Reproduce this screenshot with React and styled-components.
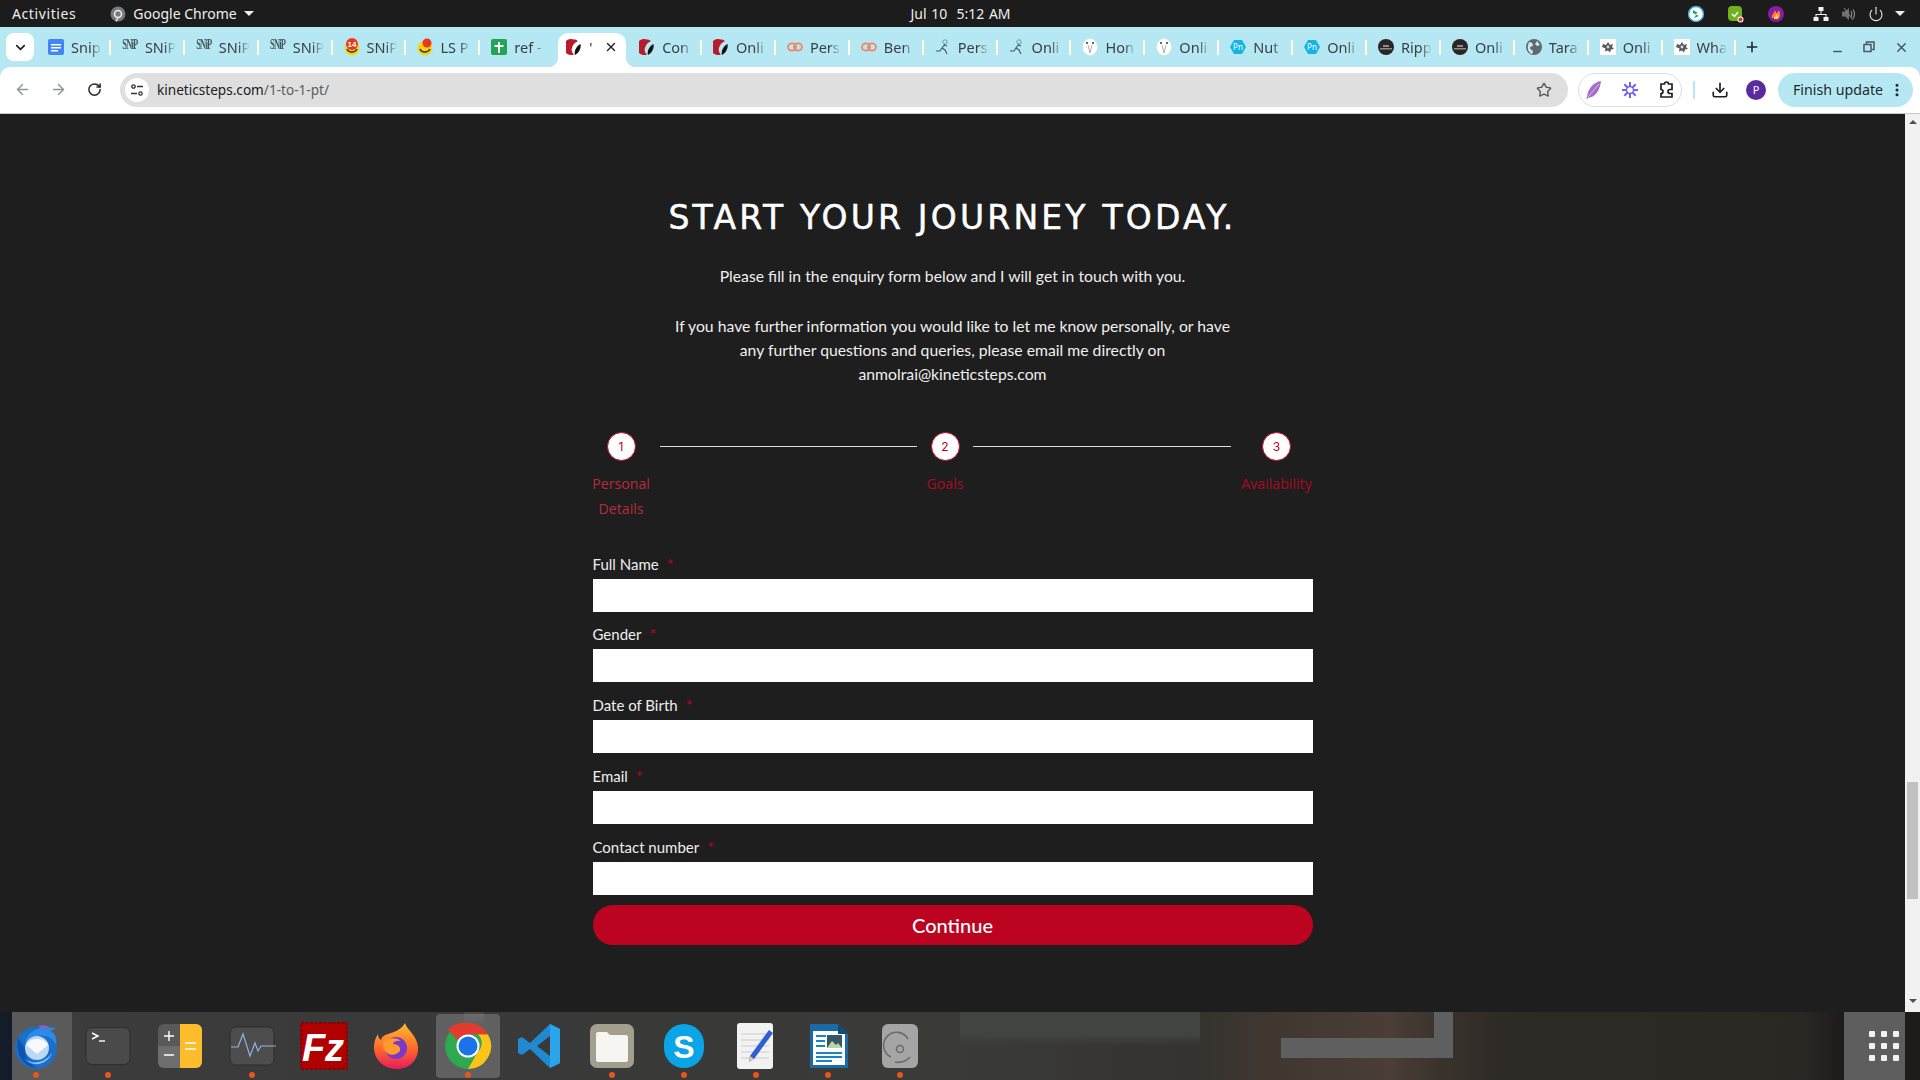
import { ArrowLeft, ArrowRight, RotateCw, Star, Download, EllipsisVertical, X, Plus, Minus, ChevronDown, Power } from "lucide-react";
import styled, { createGlobalStyle } from "styled-components";

const GlobalStyle = createGlobalStyle`
  html, body {
    margin: 0;
    padding: 0;
    background: #1e1e1e;
  }
  * {
    box-sizing: border-box;
  }
`;

const Screen = styled.div`
  width: 1920px;
  height: 1080px;
  overflow: hidden;
  display: flex;
  flex-direction: column;
  background: #1e1e1e;
`;

/* ---- gnome top bar ---- */
const TopBar = styled.div`
  height: 27px;
  flex: none;
  display: grid;
  grid-template-columns: 1fr auto 1fr;
  align-items: center;
  background: #1c1c1c;
  color: #eeeeec;
  font: 14px "Noto Sans", sans-serif;
  padding: 0 9px 0 12px;
`;
const TopLeft = styled.div`
  display: flex;
  align-items: center;
`;
const Activities = styled.span`
  letter-spacing: 0.6px;
`;
const AppName = styled.span`
  display: flex;
  align-items: center;
  gap: 7px;
  margin-left: 34px;
`;
const Caret = styled.span`
  display: inline-block;
  width: 0;
  height: 0;
  border-left: 5px solid transparent;
  border-right: 5px solid transparent;
  border-top: 5px solid #eeeeec;
`;
const Clock = styled.div`
  word-spacing: 1px;
  margin-left: -2px;
`;
const Tray = styled.div`
  display: flex;
  align-items: center;
  justify-content: flex-end;
`;
const TraySlot = styled.span`
  display: flex;
  justify-content: center;
  align-items: center;
  width: ${(p) => p.$w}px;
  margin-left: ${(p) => p.$ml || 0}px;
`;

/* ---- chrome tab strip ---- */
const TabStrip = styled.div`
  height: 40px;
  flex: none;
  display: flex;
  align-items: flex-start;
  background: #b5e8f2;
  padding: 6px 0 0 6px;
`;
const TabSearch = styled.div`
  width: 28px;
  height: 28px;
  margin-right: 3px;
  border-radius: 8px;
  background: #fff;
  display: flex;
  align-items: center;
  justify-content: center;
  color: #1f1f1f;
`;
const Tab = styled.div`
  position: relative;
  flex: none;
  width: ${(p) => (p.$active ? "68px" : "73.9px")};
  margin: ${(p) => (p.$active ? "0 1.9px 0 4px" : "0")};
  height: 34px;
  display: flex;
  align-items: center;
  gap: 7px;
  padding: 0 0 6px ${(p) => (p.$active ? "8px" : "11px")};
  background: ${(p) => (p.$active ? "#fff" : "transparent")};
  border-radius: 10px 10px 0 0;
  font: 14.5px "Noto Sans", sans-serif;
  color: #3a4144;
  ${(p) =>
    p.$active &&
    `
    z-index: 2;
    &::before, &::after {
      content: "";
      position: absolute;
      bottom: 0;
      width: 10px;
      height: 10px;
    }
    &::before {
      left: -10px;
      background: radial-gradient(circle at 0 0, transparent 10px, #fff 10.5px);
    }
    &::after {
      right: -10px;
      background: radial-gradient(circle at 100% 0, transparent 10px, #fff 10.5px);
    }
  `}
`;
const TabTitle = styled.span`
  width: ${(p) => (p.$short ? 7 : 31)}px;
  overflow: hidden;
  white-space: nowrap;
  -webkit-mask-image: linear-gradient(to right, #000 62%, transparent 100%);
  mask-image: linear-gradient(to right, #000 62%, transparent 100%);
`;
const TabSep = styled.span`
  width: 2px;
  height: 15px;
  margin-left: auto;
  background: #fff;
`;
const TabClose = styled.span`
  display: flex;
  margin-left: 1px;
  color: #1f1f1f;
`;
const NewTab = styled.div`
  width: 32px;
  height: 28px;
  display: flex;
  align-items: center;
  justify-content: center;
  color: #1f2a2d;
`;
const WindowControls = styled.div`
  display: flex;
  margin-left: auto;
  padding-right: 3px;
  height: 28px;
`;
const WindowBtn = styled.div`
  width: 32px;
  display: flex;
  align-items: center;
  justify-content: center;
  color: #4a5a5e;
`;

/* ---- chrome toolbar ---- */
const ToolbarBackdrop = styled.div`
  background: #b5e8f2;
  flex: none;
`;
const Toolbar = styled.div`
  height: 47px;
  display: flex;
  align-items: center;
  padding: 0 7px 1px 4px;
  background: #fff;
  border-radius: 10px 10px 0 0;
  border-bottom: 1px solid #c8c8c8;
`;
const NavBtn = styled.div`
  width: 36px;
  height: 34px;
  flex: none;
  display: flex;
  align-items: center;
  justify-content: center;
  color: ${(p) => (p.$dim ? "#8f9396" : "#2a2a2a")};
`;
const Omnibox = styled.div`
  flex: 1;
  height: 34px;
  margin: 0 10px 0 8px;
  padding: 0 16px 0 5px;
  display: flex;
  align-items: center;
  border-radius: 17px;
  background: #dfdfdf;
  font: 13.6px "Noto Sans", sans-serif;
  color: #5a5d60;
`;
const SiteInfo = styled.span`
  width: 24px;
  height: 24px;
  flex: none;
  margin-right: 8px;
  border-radius: 50%;
  background: #fff;
  display: flex;
  align-items: center;
  justify-content: center;
`;
const Domain = styled.span`
  color: #202124;
`;
const StarWrap = styled.span`
  margin-left: auto;
  display: flex;
  color: #555;
`;
const ExtPill = styled.div`
  width: 104px;
  height: 34px;
  flex: none;
  display: flex;
  align-items: center;
  justify-content: space-between;
  padding: 0 6px;
  border: 1px solid #dedede;
  border-radius: 17px;
`;
const ToolbarDivider = styled.span`
  width: 2px;
  height: 18px;
  flex: none;
  margin: 0 7px 0 11px;
  background: #b5e8f2;
`;
const Avatar = styled.span`
  width: 20px;
  height: 20px;
  border-radius: 50%;
  background: #5b2a9d;
  color: #fff;
  font: 11px "Noto Sans", sans-serif;
  display: flex;
  align-items: center;
  justify-content: center;
`;
const FinishUpdate = styled.div`
  width: 135px;
  height: 34px;
  flex: none;
  margin-left: 4px;
  padding: 0 8px 0 15px;
  display: flex;
  align-items: center;
  justify-content: space-between;
  border-radius: 17px;
  background: #b5e8f2;
  color: #1f2a2d;
  font: 14.2px "Noto Sans", sans-serif;
  white-space: nowrap;
`;

/* ---- page ---- */
const Viewport = styled.div`
  flex: 1;
  min-height: 0;
  display: flex;
`;
const Page = styled.main`
  flex: 1;
  display: flex;
  flex-direction: column;
  align-items: center;
  padding-top: 82px;
  background: #1e1e1e;
  color: #f2f2f2;
  font-family: Lato, sans-serif;
`;
const Heading = styled.h1`
  margin: 0;
  font: 400 33px/44px "DejaVu Sans", sans-serif;
  letter-spacing: 3.2px;
  -webkit-text-stroke: 0.5px #fff;
  color: #fff;
  white-space: nowrap;
`;
const Intro = styled.p`
  margin: ${(p) => p.$mt}px 0 0;
  max-width: 570px;
  font-size: 15.76px;
  line-height: 24px;
  text-align: center;
  color: #efefef;
`;
const Form = styled.form`
  width: 720px;
  margin-top: 46px;
`;
const Stepper = styled.div`
  display: flex;
  gap: 10px;
  margin-bottom: 31.5px;
`;
const Step = styled.div`
  display: flex;
  flex-direction: column;
  align-items: center;
  width: ${(p) => p.$w}px;
  flex: none;
`;
const StepCircle = styled.span`
  width: 29px;
  height: 29px;
  border-radius: 50%;
  background: #fff;
  border: 1px solid #bc0420;
  color: #bc0420;
  font: 12px/27px Inter, sans-serif;
  text-align: center;
`;
const StepLabel = styled.span`
  margin-top: 10px;
  font: 14.2px/25px "Open Sans", sans-serif;
  color: ${(p) => (p.$current ? "#b92a3f" : "#a80a26")};
  text-align: center;
`;
const StepLine = styled.span`
  flex: 1;
  height: 1px;
  margin-top: 14px;
  background: #dcdcdc;
`;
const Field = styled.div`
  margin-bottom: 11.75px;
`;
const FieldLabel = styled.label`
  display: block;
  height: 22px;
  margin-bottom: 4px;
  font-size: 15px;
  line-height: 22px;
  color: #eee;
`;
const Req = styled.span`
  margin-left: 8px;
  font-size: 16px;
  color: #bc0420;
`;
const Input = styled.input`
  display: block;
  width: 100%;
  height: 33px;
  border: 0;
  border-radius: 0;
  background: #fff;
`;
const SubmitBtn = styled.button`
  display: block;
  width: 100%;
  height: 40px;
  margin-top: -1px;
  border: 0;
  border-radius: 20px;
  background: #bc0420;
  color: #fff;
  font: 500 20px Lato, sans-serif;
`;

const ScrollTrack = styled.div`
  width: 15px;
  flex: none;
  display: flex;
  flex-direction: column;
  align-items: center;
  background: #f1f1f1;
`;
const ScrollArrow = styled.span`
  width: 0;
  height: 0;
  margin-top: ${(p) => p.$mt}px;
  border-left: 4px solid transparent;
  border-right: 4px solid transparent;
  ${(p) => (p.$down ? "border-top: 4px solid #505050;" : "border-bottom: 4px solid #505050;")}
`;
const ScrollThumb = styled.span`
  width: 11px;
  height: 117px;
  margin-top: 658px;
  background: #c1c1c1;
`;

/* ---- ubuntu dock ---- */
const Dock = styled.div`
  height: 68px;
  flex: none;
  display: flex;
  background-color: #333;
  background-repeat: no-repeat;
  background-image:
    linear-gradient(#5f5f5f, #5f5f5f),
    linear-gradient(#5f5f5f, #5f5f5f),
    linear-gradient(to bottom, #4a4a47, rgba(74, 74, 71, 0)),
    linear-gradient(to bottom, #42443f 65%, rgba(66, 68, 63, 0) 100%),
    linear-gradient(to right, #141c2a 0 12px, #3c3c3c 12px, #393939 500px, #3a3a38 960px, #34332f 1190px, #3f3630 1260px, #4a3e36 1390px, #3a332d 1440px, #2e2a26 1500px, #2b2824 1800px, #1d1b1a 1844px);
  background-size: 172px 20px, 19px 26px, 20px 14px, 240px 34px, 100% 100%;
  background-position: 1281px 26px, 1434px 0, 464px 0, 960px 0, 0 0;
`;
const DockItem = styled.div`
  position: relative;
  width: 72px;
  height: 68px;
  flex: none;
  display: flex;
  align-items: center;
  justify-content: center;
  background: ${(p) => (p.$edge ? "linear-gradient(to right, transparent 12px, #5a5a5a 12px)" : "none")};
  &::before {
    content: "";
    display: ${(p) => (p.$active ? "block" : "none")};
    position: absolute;
    inset: 2px 4px;
    border-radius: 4px;
    background: rgba(255, 255, 255, 0.2);
  }
  svg {
    position: relative;
  }
`;
const RunDot = styled.span`
  position: absolute;
  left: 33px;
  bottom: 2px;
  width: 6px;
  height: 6px;
  border-radius: 50%;
  background: #e95420;
`;
const GridTile = styled.div`
  width: 61px;
  margin: 0 15px 0 auto;
  padding: 19px 0 0 25px;
  background: #5e5e5e;
`;
const GridDots = styled.div`
  display: grid;
  grid-template-columns: repeat(3, 6px);
  grid-auto-rows: 6px;
  gap: 6px;
`;
const GridDot = styled.span`
  border-radius: 1px;
  background: #f2f2f2;
`;

/* ---- favicons ---- */
const SnipMark = styled.span`
  width: 16px;
  height: 16px;
  flex: none;
  overflow: hidden;
  font: 700 8.5px/12px "Liberation Serif", serif;
  letter-spacing: -0.8px;
  color: #46595c;
  text-align: center;
  transform: scaleY(1.7);
`;

function Favicon({ kind }) {
  switch (kind) {
    case "docs":
      return (
        <svg width="16" height="18" viewBox="0 0 16 18" style={{ flex: "none" }}>
          <rect y="1" width="16" height="16" rx="2" fill="#4285f4" />
          <path d="M3 6h10v1.5H3zM3 9h10v1.5H3zM3 12h7v1.5H3z" fill="#fff" />
        </svg>
      );
    case "snip":
      return <SnipMark>SNiP</SnipMark>;
    case "smile":
    case "smile14":
      return (
        <svg width="16" height="18" viewBox="0 0 16 18" style={{ flex: "none" }}>
          <circle cx="8" cy="10" r="7.5" fill="#f7d21e" />
          <path d="M3 11c1.5 4 8 4 10 0" fill="none" stroke="#333" strokeWidth="1.4" />
          <circle cx={kind === "smile" ? 10 : 8} cy={kind === "smile" ? 5 : 6} r={kind === "smile" ? 4.5 : 6} fill="#e8391f" />
          {kind === "smile14" && (
            <text x="8" y="9" textAnchor="middle" fontSize="8" fontWeight="700" fontFamily="Liberation Sans" fill="#fff">14</text>
          )}
        </svg>
      );
    case "sheet":
      return (
        <svg width="16" height="18" viewBox="0 0 16 18" style={{ flex: "none" }}>
          <rect y="1" width="16" height="16" rx="2" fill="#23a455" />
          <path d="M7 4h2v3h3.5v2H9v6H7V9H3.5V7H7z" fill="#fff" />
        </svg>
      );
    case "kinetic":
      return (
        <svg width="16" height="18" viewBox="0 0 16 18" style={{ flex: "none" }}>
          <path d="M8 1.5a8 8 0 1 0 0 15c-2.5-2-3-5-1.5-8C7.5 6 9.5 4 12 3.2 11 2.2 9.6 1.5 8 1.5z" fill="#ba1a2c" />
          <path d="M14.5 6c.8 4-1.5 9-5.5 11-1.2-3 .8-8.5 5.5-11z" fill="#111" />
        </svg>
      );
    case "code":
      return (
        <svg width="16" height="18" viewBox="0 0 16 18" style={{ flex: "none" }}>
          <ellipse cx="5" cy="9" rx="4" ry="3.6" fill="none" stroke="#f5845c" strokeWidth="1.8" />
          <ellipse cx="11" cy="9" rx="4" ry="3.6" fill="none" stroke="#f5845c" strokeWidth="1.8" />
        </svg>
      );
    case "runner":
      return (
        <svg width="16" height="18" viewBox="0 0 16 18" fill="none" style={{ flex: "none" }}>
          <circle cx="10" cy="4" r="2.2" stroke="#6d9aa0" />
          <path d="M10 6 7 10l3 2 2 4M7 10l-2 3H1M9 7l3 1" stroke="#44595c" strokeWidth="1.1" />
        </svg>
      );
    case "owl":
      return (
        <svg width="16" height="18" viewBox="0 0 16 18" style={{ flex: "none" }}>
          <ellipse cx="8" cy="9" rx="7.4" ry="8.4" fill="#fff" stroke="#dcdcdc" strokeWidth=".5" />
          <circle cx="5" cy="5" r="1" fill="#333" />
          <circle cx="11" cy="5" r="1" fill="#333" />
          <path d="M6 7l2 8 2-8" fill="none" stroke="#999" strokeWidth=".8" />
        </svg>
      );
    case "pn":
      return (
        <svg width="16" height="18" viewBox="0 0 16 18" style={{ flex: "none" }}>
          <path d="M4 2h8l4 7-4 7H4L0 9z" fill="#14b5e2" />
          <text x="8" y="12" textAnchor="middle" fontSize="8" fontFamily="Noto Sans" fill="#fff">Pn</text>
        </svg>
      );
    case "ripple":
      return (
        <svg width="16" height="18" viewBox="0 0 16 18" style={{ flex: "none" }}>
          <circle cx="8" cy="9" r="8" fill="#2b2626" />
          <path d="M2 10h12v1.4H2zM5 7h6v2H5z" fill="#8f8a8a" />
        </svg>
      );
    case "globe":
      return (
        <svg width="16" height="18" viewBox="0 0 16 18" style={{ flex: "none" }}>
          <circle cx="8" cy="9" r="8" fill="#5f6a6e" />
          <path d="M3 4c2 0 4 1 4 3s-3 1-3 3 3 1 3 4l-1 2C3 15 0 11 3 4zM11 3l3 4-3 1-2-2z" fill="#c9e6ec" />
        </svg>
      );
    default:
      return (
        <svg width="16" height="18" viewBox="0 0 16 18" style={{ flex: "none" }}>
          <rect y="1" width="16" height="16" fill="#fff" />
          <path d="M3 6l3 1 2-3 2 3 3-1-1 3 2 2-3 .5-1 3-2-2-3 1 .5-3L2 9z" fill="#5a5a5a" />
          <circle cx="8" cy="9" r="1.4" fill="#ddd" />
        </svg>
      );
  }
}

const tabs = [
  { title: "Snip", icon: "docs" },
  { title: "SNiP", icon: "snip" },
  { title: "SNiP", icon: "snip" },
  { title: "SNiP", icon: "snip" },
  { title: "SNiP", icon: "smile14" },
  { title: "LS P", icon: "smile" },
  { title: "ref -", icon: "sheet", noSep: true },
  { title: "'", icon: "kinetic", active: true },
  { title: "Con", icon: "kinetic" },
  { title: "Onli", icon: "kinetic" },
  { title: "Pers", icon: "code" },
  { title: "Ben", icon: "code" },
  { title: "Pers", icon: "runner" },
  { title: "Onli", icon: "runner" },
  { title: "Hon", icon: "owl" },
  { title: "Onli", icon: "owl" },
  { title: "Nut", icon: "pn" },
  { title: "Onli", icon: "pn" },
  { title: "Ripp", icon: "ripple" },
  { title: "Onli", icon: "ripple" },
  { title: "Tara", icon: "globe" },
  { title: "Onli", icon: "splat" },
  { title: "Wha", icon: "splat" },
];

const fields = ["Full Name", "Gender", "Date of Birth", "Email", "Contact number"];

/* dock icons, all on a 48 box */
const Thunderbird = () => (
  <svg width="48" height="48" viewBox="0 0 48 48">
    <circle cx="24" cy="26" r="21" fill="#1a6fc9" />
    <path d="M6 16C3 30 10 46 26 46c-8-3-14-10-13-20z" fill="#0f55b0" />
    <path d="M13 20C16 9 28 3 44 6l-6 3c5 2 7 6 6 14-3-8-12-11-18-9-5 1-9 3-13 6z" fill="#2d8ae6" />
    <path d="M26 4c4-1 8-1 11 1l-6 3z" fill="#7c67d8" />
    <circle cx="25" cy="26" r="12" fill="#bcd8f5" />
    <path d="M14 23l11 9 11-9c-2-4-6-6-11-6s-9 2-11 6z" fill="#f6fafe" />
    <path d="M12 36c7 7 20 6 28-5-4 11-19 16-28 5z" fill="#8fc2f2" />
  </svg>
);
const Terminal = () => (
  <svg width="48" height="48" viewBox="0 0 48 48">
    <rect x="2" y="5.5" width="44" height="37" rx="6" fill="#4a4a4a" stroke="#2d2d2d" />
    <path d="M8 11l6 3-6 3" fill="none" stroke="#fff" strokeWidth="1.4" />
    <path d="M15 19h6" stroke="#fff" strokeWidth="1.4" />
  </svg>
);
const Calculator = () => (
  <svg width="48" height="48" viewBox="0 0 48 48">
    <rect x="2" y="2" width="44" height="44" rx="6" fill="#595959" />
    <path d="M2 24h24v22H8a6 6 0 0 1-6-6z" fill="#6e6e6e" />
    <path d="M24 2h16a6 6 0 0 1 6 6v32a6 6 0 0 1-6 6H24z" fill="#fdbc2c" />
    <path d="M13 9v10M8 14h10M8 33h10M29 21h11M29 27h11" stroke="#fff" strokeWidth="1.4" />
  </svg>
);
const SysMonitor = () => (
  <svg width="48" height="48" viewBox="0 0 48 48">
    <rect x="2" y="5" width="44" height="38" rx="6" fill="#4d4d4d" stroke="#2d2d2d" />
    <path d="M3 25h7l5-13 7 22 5-13 3 8 3-5h16" fill="none" stroke="#93b0e8" strokeWidth="1.2" />
  </svg>
);
const FileZilla = () => (
  <svg width="48" height="48" viewBox="0 0 48 48">
    <rect x="1" y="1" width="46" height="46" fill="#b00000" stroke="#8e0000" strokeWidth="2" strokeDasharray="3 1.5" />
    <text x="23" y="39" textAnchor="middle" fontSize="38" fontStyle="italic" fontWeight="700" fontFamily="Liberation Sans" fill="#fff">Fz</text>
  </svg>
);
const Firefox = () => (
  <svg width="48" height="48" viewBox="0 0 48 48">
    <defs>
      <linearGradient id="ff" x1="0" y1="0" x2="0" y2="1">
        <stop offset="0" stopColor="#ffbc2e" />
        <stop offset=".55" stopColor="#ff6a2b" />
        <stop offset="1" stopColor="#e8195f" />
      </linearGradient>
    </defs>
    <path d="M33 1c1 6 12 12 13 24 1 13-9 22-21 22C12 47 2 38 2 25c0-6 2-10 4-13 0 3 1 5 3 6 1-4 4-5 7-6 6-2 13-4 17-11z" fill="url(#ff)" />
    <circle cx="24" cy="26" r="11" fill="#7a3ac7" />
    <path d="M12 19c5-3 12-4 17 0-5-1-8 1-8 3 5 0 8 3 7 7-3 4-9 5-13 2-4-3-5-8-3-12z" fill="#ff9a2e" />
  </svg>
);
const ChromeIcon = () => (
  <svg width="48" height="48" viewBox="0 0 48 48">
    <circle cx="24" cy="24" r="23" fill="#2da94f" />
    <path d="M24 1a23 23 0 0 1 20 11.5H24a11.5 11.5 0 0 0-10 6L4 7.5A23 23 0 0 1 24 1z" fill="#e33b2e" />
    <path d="M44 12.5A23 23 0 0 1 24 47l10-17.5a11.5 11.5 0 0 0 0-17z" fill="#fcc318" />
    <circle cx="24" cy="24" r="11.5" fill="#fff" />
    <circle cx="24" cy="24" r="9.5" fill="#1a73e8" />
  </svg>
);
const VSCode = () => (
  <svg width="48" height="48" viewBox="0 0 48 48">
    <path d="M34 2l10 5v34l-10 5-20-19-8 6-4-2V17l4-2 8 6zm0 12L21 24l13 10z" fill="#1f8ad2" />
    <path d="M34 2l10 5v34l-10 5z" fill="#2aa4ea" />
  </svg>
);
const Files = () => (
  <svg width="48" height="48" viewBox="0 0 48 48">
    <rect x="2" y="2" width="44" height="44" rx="7" fill="#a49e8c" />
    <path d="M8 12a2 2 0 0 1 2-2h9l3 3h16a2 2 0 0 1 2 2v23a2 2 0 0 1-2 2H10a2 2 0 0 1-2-2z" fill="#f6f5f2" />
  </svg>
);
const Skype = () => (
  <svg width="48" height="48" viewBox="0 0 48 48">
    <rect x="4" y="2" width="40" height="44" rx="20" fill="#0aa5e6" />
    <text x="24" y="36" textAnchor="middle" fontSize="32" fontWeight="700" fontFamily="Liberation Sans" fill="#fff">S</text>
  </svg>
);
const TextEditor = () => (
  <svg width="48" height="48" viewBox="0 0 48 48">
    <rect x="5" y="1" width="36" height="46" rx="3" fill="#f2f2f2" />
    <path d="M9 12h28M9 18h28M9 24h28M9 30h28M9 36h28" stroke="#ccc" />
    <path d="M37 8l4 3-19 26-5 3 1-6z" fill="#2f5fd0" />
    <path d="M18 34l4 3-5 3z" fill="#e8c79c" />
  </svg>
);
const Writer = () => (
  <svg width="48" height="48" viewBox="0 0 48 48">
    <path d="M6 2h28l10 10v34H6z" fill="#1c6aa5" />
    <rect x="9" y="9" width="32" height="34" fill="#fdfdfd" />
    <path d="M12 13h10v2H12zM12 18h9v2h-9zM12 23h9v2h-9zM12 30h26v2H12zM12 34h26v2H12zM12 38h16v2H12z" fill="#1c82c7" />
    <rect x="23" y="13" width="15" height="13" fill="#37556a" />
    <path d="M23 26l5-7 4 4 2-2 4 5z" fill="#b8d7a8" />
    <path d="M34 2l10 10H34z" fill="#0f4a78" />
  </svg>
);
const DiskTool = () => (
  <svg width="48" height="48" viewBox="0 0 48 48" fill="none">
    <rect x="6" y="2" width="36" height="44" rx="6" fill="#a5a5a5" />
    <circle cx="24" cy="27" r="3.5" stroke="#6b6b6b" strokeWidth="1.6" />
    <path d="M15 35a13 13 0 1 1 17-18M19 40a16 16 0 0 0 15-5" stroke="#6b6b6b" strokeWidth="1.6" />
  </svg>
);

const dockApps = [
  { Icon: Thunderbird, running: true, edge: true },
  { Icon: Terminal, running: true },
  { Icon: Calculator },
  { Icon: SysMonitor, running: true },
  { Icon: FileZilla },
  { Icon: Firefox },
  { Icon: ChromeIcon, running: true, active: true },
  { Icon: VSCode },
  { Icon: Files, running: true },
  { Icon: Skype, running: true },
  { Icon: TextEditor, running: true },
  { Icon: Writer, running: true },
  { Icon: DiskTool, running: true },
];

function App() {
  return (
    <Screen>
      <GlobalStyle />
      <TopBar>
        <TopLeft>
          <Activities>Activities</Activities>
          <AppName>
            <svg width="16" height="16" viewBox="0 0 16 16">
              <circle cx="8" cy="8" r="7.5" fill="#77797b" />
              <circle cx="8" cy="8" r="3.5" fill="none" stroke="#eee" strokeWidth="1.6" />
              <path d="M8 11.5 6 15.5" stroke="#eee" strokeWidth="1.2" />
            </svg>
            Google Chrome
            <Caret />
          </AppName>
        </TopLeft>
        <Clock>Jul 10 &nbsp;5:12 AM</Clock>
        <Tray>
          <TraySlot $w={40}>
            <svg width="16" height="16" viewBox="0 0 16 16">
              <circle cx="8" cy="8" r="7.5" fill="#fff" stroke="#39a9d8" strokeWidth="1.5" />
              <path d="M5 4l5 3-3 1 4 2-5 2 2-3-3-2z" fill="#15a07e" />
            </svg>
          </TraySlot>
          <TraySlot $w={40}>
            <svg width="16" height="18" viewBox="0 0 16 18">
              <rect y="1" width="14" height="15" rx="4" fill="#6fb21e" />
              <path d="M4 9l2.5 2.5L10 7" fill="none" stroke="#fff" strokeWidth="1.4" />
              <circle cx="12.5" cy="14.5" r="3" fill="#fff" />
              <circle cx="12.5" cy="14.5" r="2" fill="#e0322b" />
            </svg>
          </TraySlot>
          <TraySlot $w={40}>
            <svg width="16" height="16" viewBox="0 0 16 16">
              <circle cx="8" cy="8" r="8" fill="#8a1aa8" />
              <path d="M4 12c-1-3 2-4 3-8 1 2 1 3 2 3l2-3c1 3 2 6 0 8z" fill="#f5872a" />
              <path d="M6 13c0-2 2-3 3-5 1 2 2 3 1 5z" fill="#fde04a" />
            </svg>
          </TraySlot>
          <TraySlot $w={28} $ml={11}>
            <svg width="16" height="16" viewBox="0 0 16 16" fill="#f2f2f2">
              <rect x="5.5" y="1" width="5" height="4" />
              <rect x="0.5" y="11" width="5" height="4" />
              <rect x="10.5" y="11" width="5" height="4" />
              <path d="M7.5 5h1v3h5v3h-1V9H3.5v2h-1V8h5z" />
            </svg>
          </TraySlot>
          <TraySlot $w={28}>
            <svg width="16" height="16" viewBox="0 0 16 16">
              <path d="M1 5.5h3L8 2v12l-4-3.5H1z" fill="#6f6f6f" />
              <path d="M10 5c1 2 1 4 0 6M12 3.5c2 3 2 6 0 9" fill="none" stroke="#8a8a8a" strokeWidth="1.2" />
              <path d="M3 2l9 12" stroke="#8a8a8a" />
            </svg>
          </TraySlot>
          <TraySlot $w={26}>
            <Power size={16} color="#eeeeec" strokeWidth={1.6} />
          </TraySlot>
          <TraySlot $w={22}>
            <Caret />
          </TraySlot>
        </Tray>
      </TopBar>

      <TabStrip>
        <TabSearch>
          <ChevronDown size={15} strokeWidth={2.6} />
        </TabSearch>
        {tabs.map((tab, i) => (
          <Tab key={i} $active={tab.active}>
            <Favicon kind={tab.icon} />
            {tab.active ? (
              <>
                <TabTitle $short>{tab.title}</TabTitle>
                <TabClose>
                  <X size={14} strokeWidth={2.4} />
                </TabClose>
              </>
            ) : (
              <TabTitle>{tab.title}</TabTitle>
            )}
            {!tab.active && !tab.noSep && <TabSep />}
          </Tab>
        ))}
        <NewTab>
          <Plus size={16} strokeWidth={2.4} />
        </NewTab>
        <WindowControls>
          <WindowBtn>
            <Minus size={13} strokeWidth={2.4} style={{ marginTop: 8 }} />
          </WindowBtn>
          <WindowBtn>
            <svg width="12" height="12" viewBox="0 0 12 12" fill="none" stroke="currentColor" strokeWidth="1.5">
              <rect x="1" y="3.5" width="7" height="7" />
              <path d="M3.5 3V1H11v7.5H8.5" />
            </svg>
          </WindowBtn>
          <WindowBtn>
            <X size={15} strokeWidth={2.4} />
          </WindowBtn>
        </WindowControls>
      </TabStrip>

      <ToolbarBackdrop>
        <Toolbar>
          <NavBtn $dim>
            <ArrowLeft size={17} />
          </NavBtn>
          <NavBtn $dim>
            <ArrowRight size={17} />
          </NavBtn>
          <NavBtn>
            <RotateCw size={15} strokeWidth={2.4} />
          </NavBtn>
          <Omnibox>
            <SiteInfo>
              <svg width="14" height="14" viewBox="0 0 14 14" fill="none" stroke="#333" strokeWidth="1.3">
                <circle cx="3.5" cy="3.5" r="1.7" />
                <path d="M7 3.5h6M1 10.5h6" />
                <circle cx="10.5" cy="10.5" r="1.7" />
              </svg>
            </SiteInfo>
            <Domain>kineticsteps.com</Domain>/1-to-1-pt/
            <StarWrap>
              <Star size={16} strokeWidth={2} />
            </StarWrap>
          </Omnibox>
          <ExtPill>
            <svg width="18" height="20" viewBox="0 0 18 20">
              <path d="M16 1C9 2 3 8 2 17l-1 2 2-1c8-1 12-8 13-17z" fill="#a66cc9" />
              <path d="M14 4 3 17" stroke="#fff" strokeWidth=".6" />
            </svg>
            <svg width="18" height="18" viewBox="0 0 18 18" stroke="#6f63f2" strokeWidth="2" fill="none">
              <path d="M9 1v16M1 9h16M3.3 3.3l11.4 11.4M14.7 3.3 3.3 14.7" />
              <circle cx="9" cy="9" r="3.5" fill="#fff" strokeWidth="1.5" />
            </svg>
            <svg width="18" height="18" viewBox="0 0 18 18" fill="none" stroke="#1f1f1f" strokeWidth="1.7">
              <path d="M4 3h3.5a2 2 0 0 1 4 0H15v5.500h-2a2 2 0 0 0 0 4h2V16H4v-3.5a2 2 0 0 0 0-4z" />
            </svg>
          </ExtPill>
          <ToolbarDivider />
          <NavBtn>
            <Download size={18} strokeWidth={2.2} color="#1f1f1f" />
          </NavBtn>
          <NavBtn>
            <Avatar>P</Avatar>
          </NavBtn>
          <FinishUpdate>
            Finish update
            <EllipsisVertical size={16} strokeWidth={2.6} />
          </FinishUpdate>
        </Toolbar>
      </ToolbarBackdrop>

      <Viewport>
        <Page>
          <Heading>START YOUR JOURNEY TODAY.</Heading>
          <Intro $mt={24}>Please fill in the enquiry form below and I will get in touch with you.</Intro>
          <Intro $mt={26}>
            If you have further information you would like to let me know personally, or have any further questions
            and queries, please email me directly on anmolrai@kineticsteps.com
          </Intro>
          <Form>
            <Stepper>
              <Step $w={57}>
                <StepCircle>1</StepCircle>
                <StepLabel $current>Personal Details</StepLabel>
              </Step>
              <StepLine />
              <Step $w={36}>
                <StepCircle>2</StepCircle>
                <StepLabel>Goals</StepLabel>
              </Step>
              <StepLine />
              <Step $w={72}>
                <StepCircle>3</StepCircle>
                <StepLabel>Availability</StepLabel>
              </Step>
            </Stepper>
            {fields.map((name) => (
              <Field key={name}>
                <FieldLabel>
                  {name}
                  <Req>*</Req>
                </FieldLabel>
                <Input type="text" />
              </Field>
            ))}
            <SubmitBtn type="button">Continue</SubmitBtn>
          </Form>
        </Page>
        <ScrollTrack>
          <ScrollArrow $mt={6} />
          <ScrollThumb />
          <ScrollArrow $down $mt={100} />
        </ScrollTrack>
      </Viewport>

      <Dock>
        {dockApps.map(({ Icon, running, edge, active }, i) => (
          <DockItem key={i} $edge={edge} $active={active}>
            <Icon />
            {running && <RunDot />}
          </DockItem>
        ))}
        <GridTile>
          <GridDots>
            {Array.from({ length: 9 }).map((_, i) => (
              <GridDot key={i} />
            ))}
          </GridDots>
        </GridTile>
      </Dock>
    </Screen>
  );
}

export default App;
